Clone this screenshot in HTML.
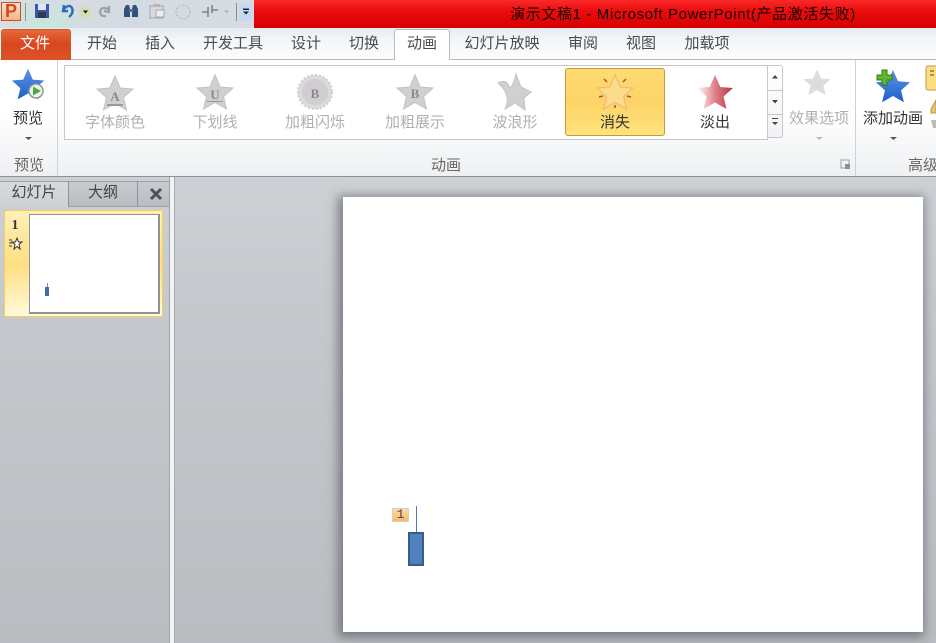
<!DOCTYPE html>
<html><head><meta charset="utf-8"><style>
html,body{margin:0;padding:0;width:936px;height:643px;overflow:hidden;background:#c2c5c9}
body{position:relative;font-family:"Liberation Sans","Noto Sans CJK SC",sans-serif;font-size:15px;color:#444}
#w{position:absolute;left:0;top:0;width:936px;height:643px;overflow:hidden;filter:blur(.3px)}
.a{position:absolute}
.t{position:absolute;transform:translateX(-50%);white-space:nowrap;line-height:18px}
svg{position:absolute;overflow:visible}
.g{color:#b0b0b0;top:114px}
.tab{top:35px;color:#4a4a4a}
</style></head><body><div id="w">

<div class="a" style="left:0;top:0;width:254px;height:28px;background:linear-gradient(90deg,#d9dee2,#d3dbe2 50%,#d6dce1)"></div>
<div class="a" style="left:20px;top:12px;width:50px;height:26px;background:#c4e8dc;filter:blur(9px)"></div>
<div class="a" style="left:254px;top:0;width:682px;height:28px;background:linear-gradient(#fb2a2a,#ea0c0c 40%,#d50000)"></div>
<div class="t" style="left:683px;top:6px;color:#1a0000;letter-spacing:.62px">演示文稿1 - Microsoft PowerPoint(产品激活失败)</div>

<div class="a" style="left:1px;top:2px;width:18px;height:17px;border:1px solid #cf4f24;background:linear-gradient(#fbe0c8,#f3b488);color:#d2491c;font:bold 18px/17px 'Liberation Sans';text-align:center">P</div>
<div class="a" style="left:25px;top:3px;width:1px;height:18px;background:#8d9499"></div>
<svg style="left:0;top:0" width="254" height="28">
 <rect x="35" y="4" width="14" height="14" fill="#3d56a8"/><rect x="38" y="4" width="8" height="6" fill="#dfe6f3"/><rect x="38" y="12" width="8" height="6" fill="#333b4a"/>
 <path d="M64 5 L63 11 L68 11 M63 10 Q69 3 72 8 Q74 13 69 17" fill="none" stroke="#2c6cc0" stroke-width="2.400"/>
 <circle cx="85" cy="12" r="6" fill="#d5dda0" opacity=".7"/><path d="M83 10.500h5l-2.500 3z" fill="#111"/>
 <path d="M109 6 L109 12 L104 11 M108 9 Q101 6 100 12 Q101 17 106 16" fill="none" stroke="#9ba2a6" stroke-width="2.200"/>
 <path d="M124 17v-8l2-4h3l1 4v8zM132 17v-8l1-4h3l2 4v8z" fill="#33507f"/><rect x="129" y="9" width="4" height="3" fill="#5b6f93"/>
 <rect x="150" y="6" width="13" height="12" fill="#d8dadc" stroke="#a6a9ab"/><rect x="153" y="4" width="7" height="3" fill="#b4b6b8"/><rect x="156" y="10" width="8" height="7" fill="#eee" stroke="#a8a8a8"/>
 <circle cx="183" cy="12" r="7" fill="none" stroke="#b0b3b5" stroke-dasharray="2 1.500"/>
 <path d="M202 12h6M212 10h6M208 7v10M212 5v8" stroke="#7b8084" stroke-width="1.500" fill="none"/>
 <path d="M224 10.500h5l-2.500 2.500z" fill="#a5a9ac"/>
 <rect x="236" y="3" width="1" height="18" fill="#878d91"/>
 <rect x="239" y="4" width="14" height="17" fill="#c6d8f2"/>
 <rect x="243" y="8.500" width="6" height="1.500" fill="#222"/><path d="M243 11.500h6l-3 3z" fill="#222"/>
</svg>

<div class="a" style="left:0;top:28px;width:936px;height:31px;background:linear-gradient(#e6ecf2,#f3f6fa 40%,#fdfdfe);border-bottom:1px solid #b6b8ba"></div>
<div class="a" style="left:1px;top:29px;width:68px;height:30px;border:1px solid #cf5a2d;border-bottom:0;border-radius:3px 3px 0 0;background:linear-gradient(#e56a3a,#d9471f 45%,#dd5428)"></div>
<div class="t" style="left:35px;top:35px;color:#fff">文件</div>
<div class="a" style="left:394px;top:29px;width:54px;height:31px;border:1px solid #b9bcbf;border-bottom:0;border-radius:3px 3px 0 0;background:#fff"></div>
<div class="t tab" style="left:102px">开始</div>
<div class="t tab" style="left:160px">插入</div>
<div class="t tab" style="left:233px">开发工具</div>
<div class="t tab" style="left:306px">设计</div>
<div class="t tab" style="left:364px">切换</div>
<div class="t tab" style="left:422px">动画</div>
<div class="t tab" style="left:502px">幻灯片放映</div>
<div class="t tab" style="left:583px">审阅</div>
<div class="t tab" style="left:641px">视图</div>
<div class="t tab" style="left:707px">加载项</div>

<div class="a" style="left:0;top:60px;width:936px;height:116px;background:linear-gradient(#fff,#fff 45%,#eef0f2);border-bottom:1px solid #8e9296"></div>
<div class="a" style="left:57px;top:60px;width:1px;height:116px;background:#cfd2d5"></div>
<div class="a" style="left:855px;top:60px;width:1px;height:116px;background:#cfd2d5"></div>

<div class="a" style="left:64px;top:65px;width:702px;height:73px;border:1px solid #c4c6c8;background:#fff"></div>
<div class="a" style="left:565px;top:68px;width:98px;height:66px;border:1px solid #c29a45;border-radius:3px;background:linear-gradient(#fedb72,#fdd467 50%,#ffe37c)"></div>

<div class="a" style="left:767px;top:65px;width:16px;height:73px;border:1px solid #c4c6c8;box-sizing:border-box;background:linear-gradient(#fff,#f0f2f4);border-radius:0 3px 3px 0"></div>
<div class="a" style="left:767px;top:90px;width:16px;height:1px;background:#c4c6c8"></div>
<div class="a" style="left:767px;top:114px;width:16px;height:1px;background:#c4c6c8"></div>

<svg style="left:0;top:0;filter:blur(.3px)" width="936" height="180">
 <defs>
  <path id="s" d="M0 -18 L5.300 -6 L18 -5 L8.500 3.500 L11.500 16 L0 9.500 L-11.500 16 L-8.500 3.500 L-18 -5 L-5.300 -6Z"/>
  <linearGradient id="bl" x1="0" y1="0" x2="0" y2="1"><stop offset="0" stop-color="#5c93e6"/><stop offset="1" stop-color="#1f5fc8"/></linearGradient>
  <linearGradient id="rd" x1="0" y1="0" x2="1" y2="0"><stop offset="0" stop-color="#fff"/><stop offset=".5" stop-color="#e0808a"/><stop offset="1" stop-color="#b8323c"/></linearGradient>
 </defs>
 <use href="#s" transform="translate(28,85) scale(.9)" fill="url(#bl)"/>
 <circle cx="36" cy="91" r="7" fill="#eef3ee" stroke="#8a9aa0" stroke-width="1.500"/><path d="M33 86.500 L41 91 L33 95.500Z" fill="#4fa93a"/>

 <use href="#s" transform="translate(115,94)" fill="#d2cfd2" stroke="#c4c2c4"/>
 <use href="#s" transform="translate(215,93)" fill="#d2cfd2" stroke="#c4c2c4"/>
 <g transform="translate(315,92)"><circle r="17" fill="#dcdadc" stroke="#cfcdcf" stroke-width="2" stroke-dasharray="2 2"/><circle r="13" fill="#d0ced0"/></g>
 <use href="#s" transform="translate(415,93)" fill="#d2cfd2" stroke="#c4c2c4"/>
 <path d="M498 83 Q506 78 510 88 Q514 84 516 74 L521 87 L531 92 L524 98 L525 110 Q518 105 515 103 L505 109 Q512 95 498 83Z" fill="#d2cfd2" stroke="#c4c2c4"/>
 <use href="#s" transform="translate(615,93)" fill="#fbdc8c" stroke="#eeb66c"/>
 <path d="M604 79l3 3M626 79l-3 3M599 97l4-1M631 97l-4-1M615 108v-3" stroke="#c8443c" stroke-width="1.500"/>
 <use href="#s" transform="translate(715,93)" fill="url(#rd)"/>
 <use href="#s" transform="translate(817,83) scale(.75)" fill="#dcdcdc"/>
 <use href="#s" transform="translate(893,87) scale(.95)" fill="url(#bl)"/>
 <path d="M882 70h5v5h5v5h-5v5h-5v-5h-5v-5h5z" fill="#62b52c" stroke="#2f7a18"/>
 <path d="M772 78.500h6l-3-3.500zM772 100h6l-3 3.500zM772 122h6l-3 3z" fill="#444" stroke="none"/>
 <rect x="772" y="118" width="6" height="1" fill="#444"/>
 <path d="M25 137h7l-3.500 3z" fill="#555"/>
 <path d="M816 137h7l-3.500 3z" fill="#bbb"/>
 <path d="M890 137h7l-3.500 3z" fill="#555"/>
 <path d="M841 160h8v8h-8z" fill="none" stroke="#9a9ea2"/><path d="M845 164h5v5h-5z" fill="#8b9094"/>
 <rect x="926" y="66" width="14" height="24" rx="2" fill="#fdde7e" stroke="#c29a45"/>
 <path d="M930 71h4M930 75h4" stroke="#444"/>
 <path d="M936 100l-5 9v4h5z" fill="#e8c868" stroke="#b59a50"/>
 <path d="M931 120h5v8h-3z" fill="#bbb"/>
</svg>

<div class="t" style="left:28px;top:110px;color:#333">预览</div>
<div class="t" style="left:29px;top:157px;color:#666">预览</div>
<div class="t g" style="left:115px">字体颜色</div>
<div class="t g" style="left:215px">下划线</div>
<div class="t g" style="left:315px">加粗闪烁</div>
<div class="t g" style="left:415px">加粗展示</div>
<div class="t g" style="left:515px">波浪形</div>
<div class="t" style="left:615px;top:114px;color:#333">消失</div>
<div class="t" style="left:715px;top:114px;color:#333">淡出</div>
<div class="t" style="left:819px;top:110px;color:#b0b0b0">效果选项</div>
<div class="t" style="left:893px;top:110px;color:#333">添加动画</div>
<div class="t" style="left:446px;top:157px;color:#666">动画</div>
<div class="t" style="left:923px;top:157px;color:#666">高级</div>
<div class="t" style="left:115px;top:90px;font:bold 13px/14px 'Liberation Serif';color:#8a888a">A</div>
<div class="a" style="left:107px;top:104px;width:16px;height:2px;background:#9b999b"></div>
<div class="t" style="left:215px;top:88px;font:bold 13px/14px 'Liberation Serif';color:#8a888a">U</div>
<div class="a" style="left:207px;top:101px;width:16px;height:1px;background:#9b999b"></div>
<div class="t" style="left:315px;top:87px;font:bold 13px/14px 'Liberation Serif';color:#8a888a">B</div>
<div class="t" style="left:415px;top:87px;font:bold 13px/14px 'Liberation Serif';color:#8a888a">B</div>

<div class="a" style="left:0;top:177px;width:936px;height:466px;background:linear-gradient(#cdd0d4,#c6c9cd 25%,#b9bcc0)"></div>
<div class="a" style="left:170px;top:177px;width:4px;height:466px;background:#f2f3f4"></div>
<div class="a" style="left:169px;top:177px;width:1px;height:466px;background:#9da1a5"></div>
<div class="a" style="left:174px;top:177px;width:1px;height:466px;background:#a9adb1"></div>

<div class="a" style="left:0;top:181px;width:169px;height:26px;background:linear-gradient(#c7cbcf,#b9bdc1);border-top:1px solid #9da1a5;border-bottom:1px solid #9da1a5;box-sizing:border-box"></div>
<div class="a" style="left:0;top:181px;width:69px;height:26px;background:linear-gradient(#d7dadd,#cdd1d5);border-top:1px solid #9da1a5;border-right:1px solid #8f9397;box-sizing:border-box"></div>
<div class="a" style="left:137px;top:181px;width:1px;height:26px;background:#8f9397"></div>
<div class="t" style="left:34px;top:184px;color:#444">幻灯片</div>
<div class="t" style="left:103px;top:184px;color:#444">大纲</div>
<svg style="left:150px;top:188px" width="12" height="12"><path d="M1 1L11 11M11 1L1 11" stroke="#4e5256" stroke-width="3"/></svg>

<div class="a" style="left:4px;top:210px;width:157px;height:105px;border:1px solid #f3cf57;border-radius:2px;background:linear-gradient(#fff0b8,#fedf82 50%,#fff9dc)"></div>
<div class="t" style="left:15px;top:217px;font:bold 14px/18px 'Liberation Serif';color:#333">1</div>
<svg style="left:9px;top:238px" width="14" height="12"><path d="M8 0L9.500 4H13L10 6.500 11 11 8 8.500 5 11 6 6.500 3 4H6.500Z" fill="#fff" stroke="#333"/><path d="M0 2h3M0 5h3M0 8h3" stroke="#333"/></svg>
<div class="a" style="left:29px;top:214px;width:128px;height:97px;border:1px solid #90949a;border-width:1px 2px 2px 1px;background:#fff"></div>
<div class="a" style="left:45px;top:287px;width:4px;height:9px;background:#3f6fa8"></div>
<div class="a" style="left:47px;top:283px;width:1px;height:4px;background:#6f94c0"></div>

<div class="a" style="left:343px;top:197px;width:580px;height:435px;background:#fff;box-shadow:-2px 2px 10px 3px rgba(70,75,80,.6)"></div>
<div class="a" style="left:416px;top:506px;width:1px;height:27px;background:#4a7ebb"></div>
<div class="a" style="left:408px;top:532px;width:12px;height:30px;border:2px solid #385d8a;background:#4f81bd"></div>
<div class="a" style="left:392px;top:508px;width:15px;height:12px;border:1.500px solid #d2d0cc;border-radius:1px;background:linear-gradient(#fddca8,#fbb862);font:13px/12px 'Liberation Mono';text-align:center;color:#444">1</div>
</div></body></html>
